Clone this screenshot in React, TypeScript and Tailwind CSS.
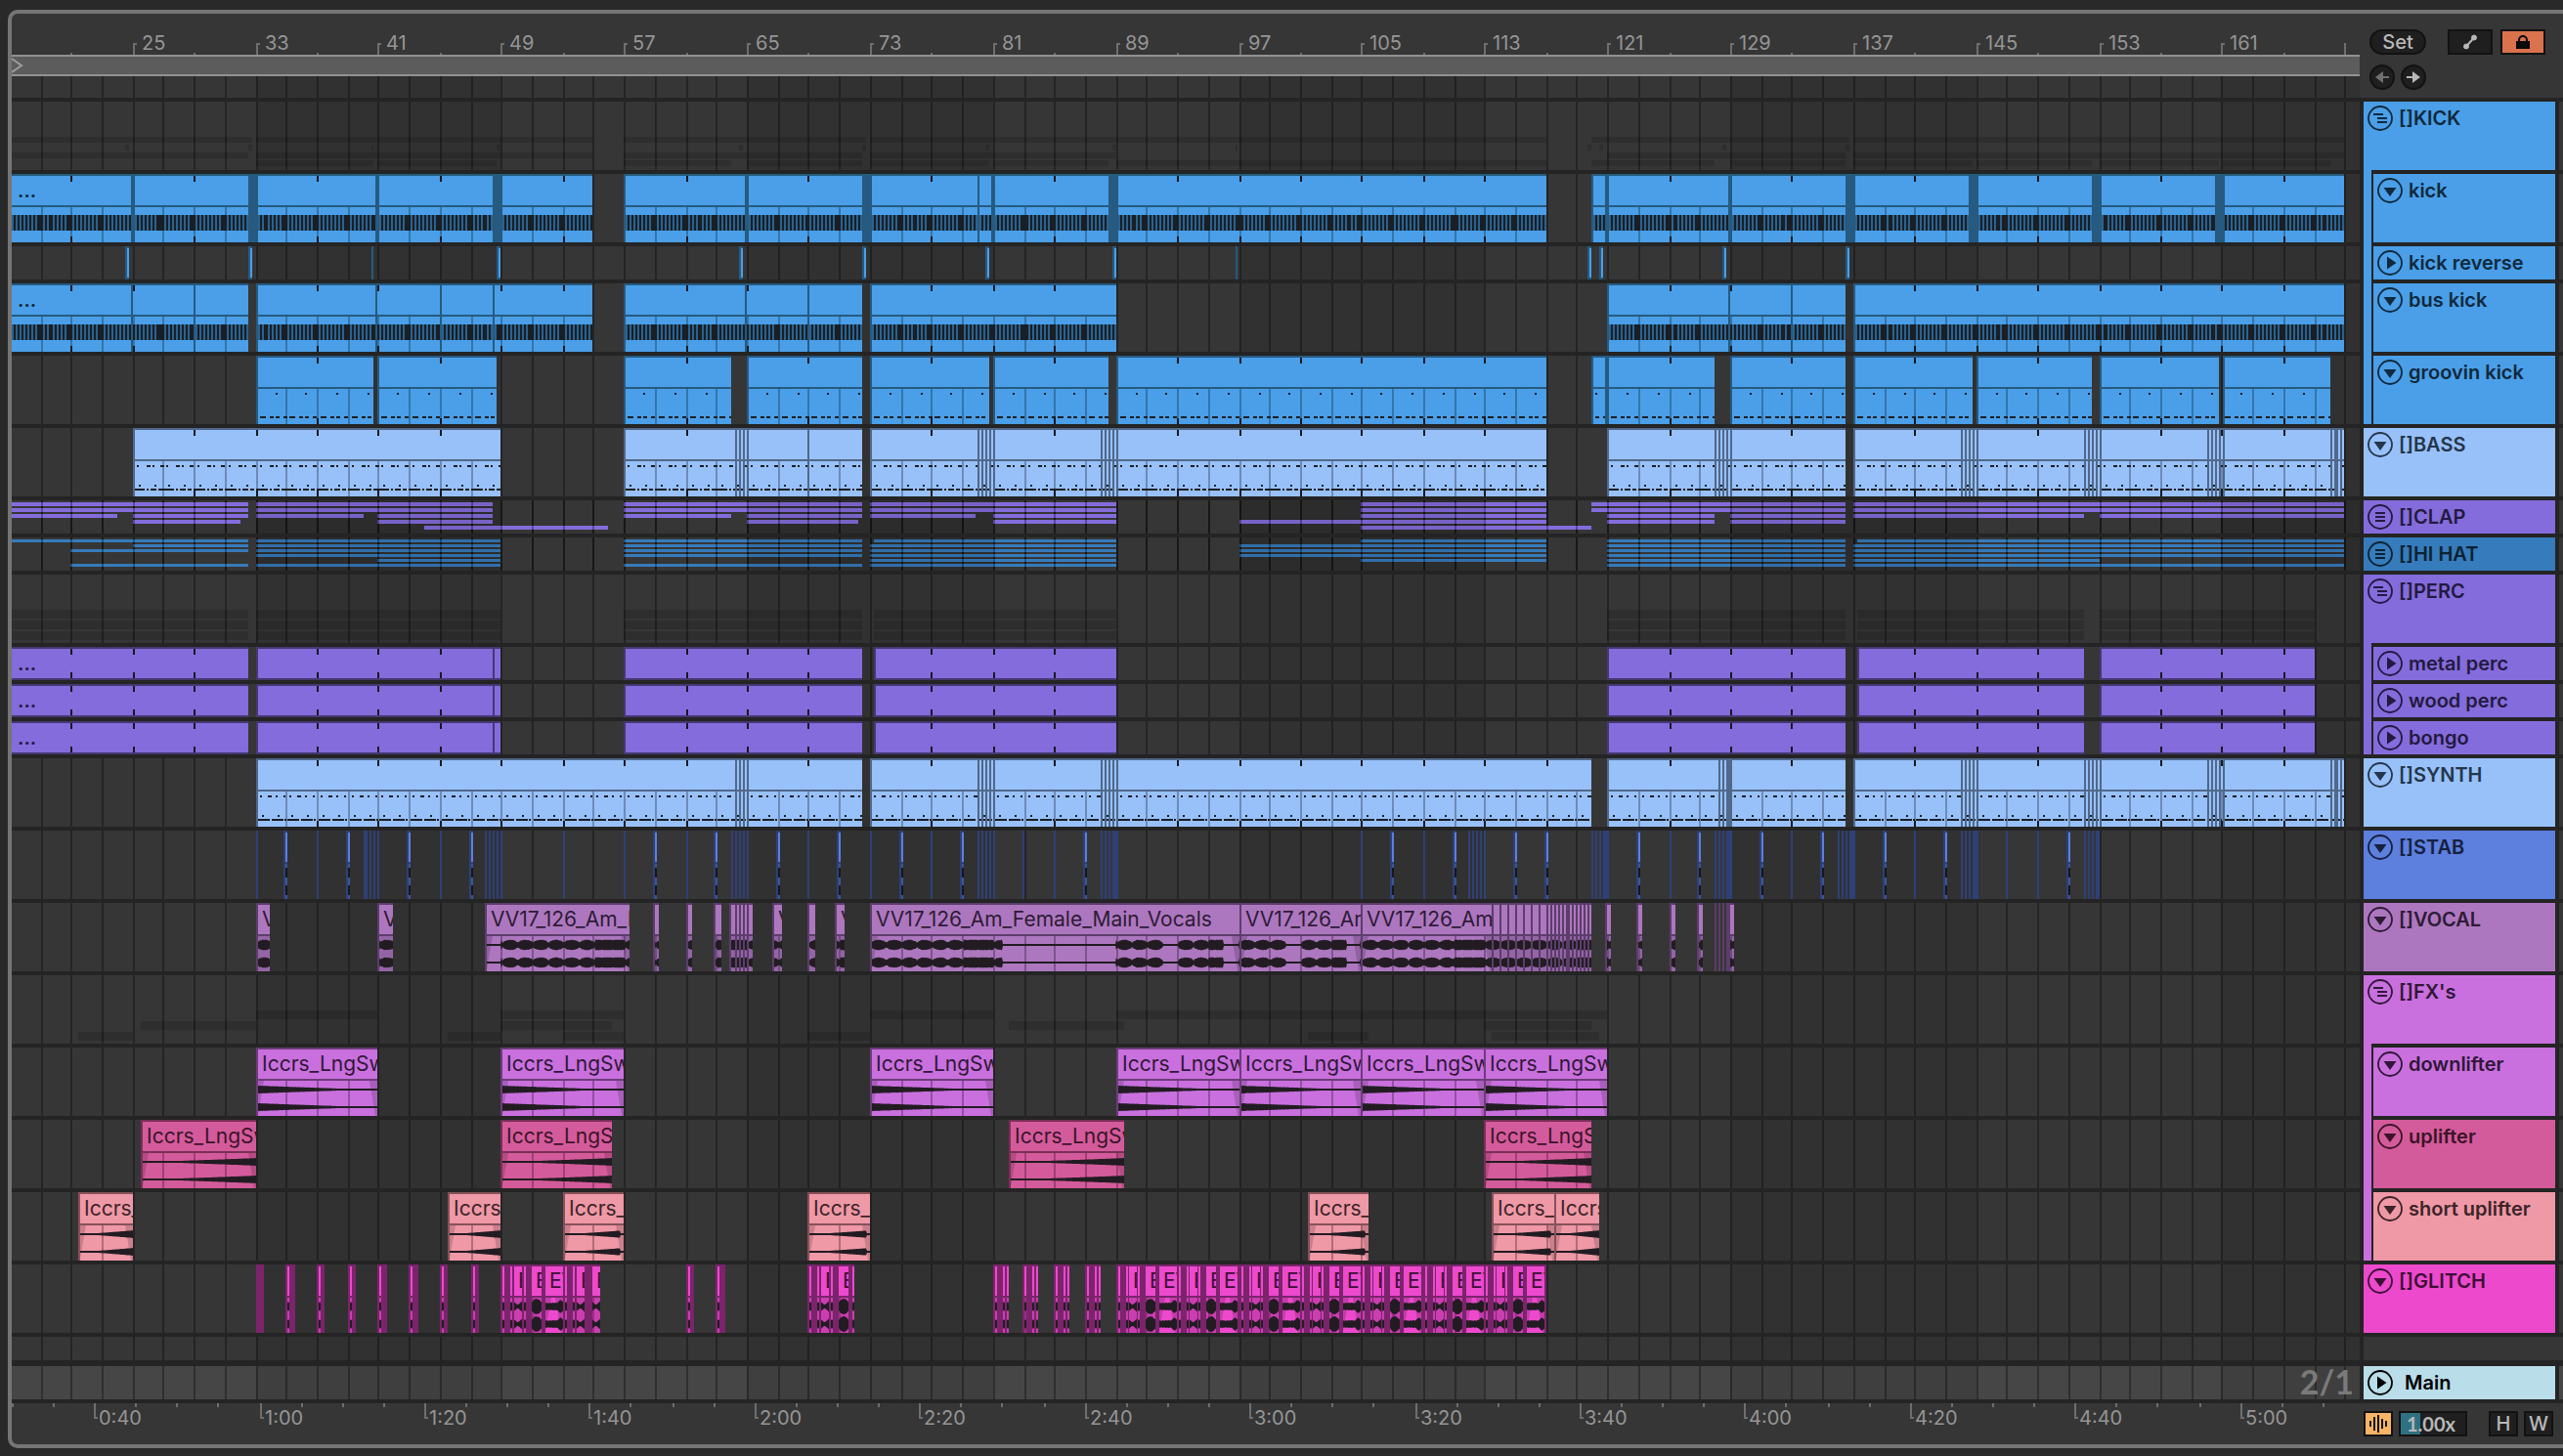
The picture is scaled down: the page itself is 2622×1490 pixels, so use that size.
import React from 'react';

type Span = [number, number];
type Kind = 'beats' | 'groove' | 'bass' | 'synth' | 'plain' | 'vocal' | 'down' | 'up' | 'glitch';

interface Run {
  from: number;
  to: number;
  cuts?: Span[];
  quiet?: Span[];
  title?: string;
}

interface Palette {
  bg: string;
  ink: string;
  fill: string;
  edge: string;
}

interface Track {
  name: string;
  tall: boolean;
  icon: 'down' | 'right' | 'fold' | 'list';
  colors: Palette;
  kind?: Kind;
  runs?: Run[];
  bars?: { height: number; pitch: number; top: number; rows: Span[][]; ghost?: boolean };
  slivers?: Span[];
  hits?: number[];
  children?: Track[];
}

// Timeline scale. Positions are in canvas pixels, the view starts at ORIGIN.
const ORIGIN = 12;
const BAR_WIDTH = 15.716;
const SECOND_WIDTH = 8.443;

const snap = (x: number) => 2 * Math.floor(x / 2);
const barX = (bar: number) => snap(262.2 + (bar - 33) * BAR_WIDTH);
const timeX = (seconds: number) => 266 + (seconds - 60) * SECOND_WIDTH;

const range = (from: number, to: number, step: number) => {
  const out: number[] = [];
  for (let i = from; i <= to; i += step) out.push(i);
  return out;
};

const gridBars = range(17, 261, 2);

const box = (x: number, y: number, w: number, h: number) => `M${x} ${y}h${w}v${h}h${-w}z`;
const lines = (...xs: number[]): Span[] => xs.map((x) => [x, x + 2]);
const runs = (...spans: Span[]): Run[] => spans.map(([from, to]) => ({ from, to }));
const titled = (title: string, ...spans: Span[]): Run[] => spans.map(([from, to]) => ({ from, to, title }));

// The bright parts of a run, between its cuts
const segmentsOf = (run: Run): Span[] => {
  const out: Span[] = [];
  let x = run.from === ORIGIN ? run.from : run.from + 2;
  (run.cuts || []).forEach(([a, b]) => {
    if (a > x) out.push([x, a]);
    x = b;
  });
  if (run.to > x) out.push([x, run.to]);
  return out;
};

const lit = (from: number, to: number, parts: Span[], title?: string): Run => {
  const cuts: Span[] = [];
  let x = from;
  parts.forEach(([a, b]) => {
    cuts.push([x, a]);
    x = b;
  });
  if (x < to) cuts.push([x, to]);
  return { from, to, cuts, title };
};

const blue: Palette = { bg: 'bg-[#4a9fe8]', ink: 'text-[#10293c]', fill: '#4a9fe8', edge: '#265a80' };
const sky: Palette = { bg: 'bg-[#98c1fa]', ink: 'text-[#24364a]', fill: '#98c1fa', edge: '#50688a' };
const purple: Palette = { bg: 'bg-[#846cdc]', ink: 'text-[#231a40]', fill: '#846cdc', edge: '#463872' };
const steel: Palette = { bg: 'bg-[#367bbb]', ink: 'text-[#0a2233]', fill: '#367bbb', edge: '#1e4568' };
const royal: Palette = { bg: 'bg-[#5d7fde]', ink: 'text-[#16213f]', fill: '#5d7fde', edge: '#2e4078' };
const mauve: Palette = { bg: 'bg-[#ad77bf]', ink: 'text-[#2d1b36]', fill: '#ad77bf', edge: '#5c3d6b' };
const orchid: Palette = { bg: 'bg-[#c970de]', ink: 'text-[#301738]', fill: '#c970de', edge: '#6d3c7a' };
const rose: Palette = { bg: 'bg-[#d45b9b]', ink: 'text-[#3b1429]', fill: '#d45b9b', edge: '#7a2f57' };
const salmon: Palette = { bg: 'bg-[#ef98a6]', ink: 'text-[#3c2428]', fill: '#ef98a6', edge: '#86515a' };
const magenta: Palette = { bg: 'bg-[#ec49cd]', ink: 'text-[#3d0f35]', fill: '#ec49cd', edge: '#7b246c' };

const kickRuns: Run[] = [
  { from: 12, to: 606, cuts: [[134, 138], [254, 264], [384, 388], [504, 514]] },
  { from: 638, to: 1582, cuts: [[762, 766], [882, 892], [1000, 1002], [1014, 1018], [1134, 1144]] },
  { from: 1628, to: 2398, cuts: [[1642, 1646], [1768, 1772], [1888, 1898], [2014, 2024], [2140, 2150], [2266, 2276]] },
];

const busRuns: Run[] = [
  { from: 12, to: 254, cuts: lines(134, 198) },
  { from: 262, to: 606, cuts: lines(384, 450, 504) },
  { from: 638, to: 882, cuts: lines(762, 826) },
  { from: 890, to: 1142 },
  { from: 1644, to: 1888, cuts: lines(1768, 1832) },
  { from: 1896, to: 2398 },
];

const grooveRuns: Run[] = [
  ...runs([262, 382], [386, 508], [638, 748], [764, 882], [890, 1012], [1016, 1134], [1142, 1582]),
  { from: 1628, to: 1754, cuts: [[1642, 1646]] },
  ...runs([1770, 1888], [1896, 2018], [2022, 2140], [2148, 2270], [2274, 2384]),
];

const lateCuts: Span[] = [
  ...lines(2006, 2010, 2014, 2018, 2022, 2132, 2136, 2140, 2144, 2148, 2258, 2262, 2266, 2270, 2274, 2384),
  [2388, 2392],
  [2394, 2396],
];

const bassRuns: Run[] = [
  { from: 136, to: 512 },
  { from: 638, to: 882, cuts: lines(752, 756, 760, 764, 826) },
  { from: 890, to: 1582, cuts: lines(1000, 1004, 1008, 1012, 1016, 1126, 1130, 1134, 1138, 1142) },
  { from: 1644, to: 1888, cuts: lines(1754, 1758, 1762, 1766, 1770) },
  { from: 1896, to: 2398, cuts: lateCuts },
];

const synthRuns: Run[] = [
  { from: 262, to: 882, cuts: lines(752, 756, 760, 764) },
  { from: 890, to: 1628, cuts: lines(1000, 1004, 1008, 1012, 1016, 1126, 1130, 1134, 1138, 1142) },
  { from: 1644, to: 1888, cuts: [...lines(1758, 1762), [1766, 1772]] },
  { from: 1896, to: 2398, cuts: lateCuts },
];

const percSpans: Span[] = [[12, 254], [262, 512], [638, 882], [894, 1142], [1644, 1888], [1900, 2132], [2148, 2368]];
const percRuns: Run[] = percSpans.map(([from, to]) => ({ from, to, cuts: from === 262 ? lines(504) : undefined }));

const reverseSpans: Span[] = [
  [128, 132], [254, 258], [380, 382], [508, 512], [756, 760], [882, 886], [1008, 1012], [1138, 1142],
  [1264, 1266], [1624, 1628], [1636, 1640], [1762, 1766], [1888, 1892],
];

const clapRows: Span[][] = [
  [[12, 254], [262, 504], [638, 882], [890, 1142], [1392, 1582], [1628, 1888], [1896, 2398]],
  [[12, 254], [262, 504], [638, 882], [890, 1142], [1392, 1582], [1628, 1888], [1896, 2398]],
  [
    [12, 120], [136, 254], [262, 372], [386, 504], [638, 748], [764, 882], [890, 998], [1016, 1142],
    [1392, 1582], [1644, 1754], [1770, 1888], [1896, 2132], [2148, 2398],
  ],
  [[136, 246], [386, 504], [764, 878], [1016, 1142], [1268, 1582], [1644, 1754], [1770, 1888]],
  [[434, 622], [1392, 1628]],
];

const hatRows: Span[][] = [
  [[12, 254], [262, 512], [638, 882], [894, 1142], [1392, 1582], [1644, 1888], [1900, 2398]],
  [[136, 254], [262, 512], [638, 882], [890, 1142], [1268, 1582], [1644, 1888], [1896, 2398]],
  [[72, 254], [262, 512], [638, 882], [890, 1142], [1268, 1582], [1644, 1888], [1896, 2398]],
  [[262, 512], [638, 882], [890, 1142], [1268, 1582], [1644, 1888], [1896, 2398]],
  [[386, 512], [890, 1142], [1392, 1582], [1644, 1888], [1896, 2148]],
  [[72, 254], [262, 512], [638, 882], [890, 1142], [1644, 1888], [1896, 2398]],
];

const stabSlivers: Span[] = [
  ...lines(262, 324, 378, 382, 386, 450, 496, 500, 504, 508, 512, 576, 638, 702, 748, 752, 756, 760, 764),
  [372, 376],
  ...lines(826, 890, 952, 1000, 1004, 1008, 1012, 1016, 1046, 1078, 1126, 1130, 1134),
  [1138, 1144],
  ...lines(1392, 1456, 1502, 1506, 1510, 1514, 1518, 1628, 1632, 1636),
  [1640, 1646],
  ...lines(1708, 1754, 1758, 1762),
  [1766, 1772],
  ...lines(1832, 1880, 1884, 1888),
  [1892, 1898],
  ...lines(1958, 2006, 2010, 2014),
  [2018, 2024],
  ...lines(2052, 2084, 2132, 2136, 2140),
  [2144, 2148],
];

const stabHits = [
  290, 354, 416, 480, 668, 730, 794, 856, 920, 982, 1108, 1422, 1486, 1548, 1580, 1674, 1736, 1800, 1862,
  1926, 1988, 2114,
];

const VOX = 'VV17_126_Am_Female_Main_Vocals';
const SWEEP = 'Iccrs_LngSweep';

const vocalRuns: Run[] = [
  ...titled(VOX, [262, 276], [386, 402]),
  { from: 496, to: 644, title: VOX, quiet: [[496, 513]] },
  ...runs([668, 674], [702, 708], [730, 738]),
  { from: 746, to: 770, cuts: lines(752, 756, 760, 764) },
  ...titled(VOX, [790, 800]),
  ...runs([826, 834]),
  ...titled(VOX, [854, 864]),
  { from: 890, to: 1268, title: VOX, quiet: [[1026, 1142], [1190, 1206], [1252, 1268]] },
  { from: 1268, to: 1392, title: VOX, quiet: [[1316, 1332], [1378, 1392]] },
  { from: 1392, to: 1526, title: VOX },
  {
    from: 1526,
    to: 1628,
    cuts: [
      ...lines(1534, 1542, 1550, 1558, 1566, 1574, 1582, 1586, 1590, 1594, 1598),
      [1602, 1606],
      ...lines(1608, 1612, 1616, 1620, 1624),
    ],
  },
  ...runs([1642, 1648], [1674, 1680], [1708, 1714], [1736, 1742]),
  lit(1754, 1756, []),
  lit(1758, 1760, []),
  lit(1762, 1764, []),
  lit(1766, 1774, [[1770, 1774]]),
];

const downSpans: Span[] = [[262, 386], [512, 638], [890, 1016], [1142, 1268], [1268, 1392], [1392, 1518], [1518, 1644]];
const upSpans: Span[] = [[144, 262], [512, 626], [1032, 1150], [1518, 1628]];
const shortSpans: Span[] = [[80, 136], [458, 512], [576, 638], [826, 890], [1338, 1400], [1526, 1590], [1590, 1636]];

const glitchRuns: Run[] = [
  lit(262, 270, []),
  ...[[292, 302], [324, 332], [356, 364], [386, 396], [418, 428], [450, 458], [482, 490], [702, 710], [732, 742]].map(
    ([a, b]) => lit(a, b, [[a + 2, a + 4]]),
  ),
  lit(
    512,
    614,
    [[514, 516], [522, 524], [526, 534], [536, 538], [544, 554], [558, 576], [578, 580], [586, 588], [590, 598], [606, 614]],
    'EVO',
  ),
  lit(826, 874, [[828, 830], [836, 838], [840, 848], [850, 852], [858, 868], [872, 874]], 'EVO'),
  ...[1016, 1046, 1078, 1110].map((a) => lit(a, a + 16, [[a + 2, a + 4], [a + 10, a + 12], [a + 14, a + 16]])),
  lit(
    1142,
    1582,
    range(0, 6, 1).flatMap((i) => {
      const x = snap(1142 + i * BAR_WIDTH * 4 + 0.4);
      const parts: Span[] = [
        [x + 2, x + 4],
        [x + 10, x + 12],
        [x + 13, x + 21],
        [x + 22, x + 24],
        [x + 30, x + 40],
        [x + 44, x + 62],
      ];
      return parts;
    }),
    'EVO',
  ),
];

const spansOf = (list: Run[]): Span[] => list.map((r) => [r.from, r.to]);

const tracks: Track[] = [
  {
    name: '[]KICK',
    tall: true,
    icon: 'fold',
    colors: blue,
    bars: {
      height: 6,
      pitch: 8,
      top: 36,
      ghost: true,
      rows: [
        [[12, 258], [262, 606], [638, 886], [890, 1582], [1628, 1892], [1896, 2398]],
        reverseSpans,
        spansOf(busRuns),
        spansOf(grooveRuns),
      ],
    },
    children: [
      { name: 'kick', tall: true, icon: 'down', colors: blue, kind: 'beats', runs: kickRuns },
      { name: 'kick reverse', tall: false, icon: 'right', colors: blue, slivers: reverseSpans },
      { name: 'bus kick', tall: true, icon: 'down', colors: blue, kind: 'beats', runs: busRuns },
      { name: 'groovin kick', tall: true, icon: 'down', colors: blue, kind: 'groove', runs: grooveRuns },
    ],
  },
  { name: '[]BASS', tall: true, icon: 'down', colors: sky, kind: 'bass', runs: bassRuns },
  { name: '[]CLAP', tall: false, icon: 'list', colors: purple, bars: { height: 4, pitch: 6, top: 2, rows: clapRows } },
  { name: '[]HI HAT', tall: false, icon: 'list', colors: steel, bars: { height: 3, pitch: 5, top: 2, rows: hatRows } },
  {
    name: '[]PERC',
    tall: true,
    icon: 'fold',
    colors: purple,
    bars: { height: 9, pitch: 11, top: 36, ghost: true, rows: [percSpans, percSpans, percSpans] },
    children: [
      { name: 'metal perc', tall: false, icon: 'right', colors: purple, kind: 'plain', runs: percRuns },
      { name: 'wood perc', tall: false, icon: 'right', colors: purple, kind: 'plain', runs: percRuns },
      { name: 'bongo', tall: false, icon: 'right', colors: purple, kind: 'plain', runs: percRuns },
    ],
  },
  { name: '[]SYNTH', tall: true, icon: 'down', colors: sky, kind: 'synth', runs: synthRuns },
  { name: '[]STAB', tall: true, icon: 'down', colors: royal, slivers: stabSlivers, hits: stabHits },
  { name: '[]VOCAL', tall: true, icon: 'down', colors: mauve, kind: 'vocal', runs: vocalRuns },
  {
    name: "[]FX's",
    tall: true,
    icon: 'fold',
    colors: orchid,
    bars: { height: 9, pitch: 11, top: 36, ghost: true, rows: [downSpans, upSpans, shortSpans] },
    children: [
      { name: 'downlifter', tall: true, icon: 'down', colors: orchid, kind: 'down', runs: titled(SWEEP, ...downSpans) },
      { name: 'uplifter', tall: true, icon: 'down', colors: rose, kind: 'up', runs: titled(SWEEP, ...upSpans) },
      { name: 'short uplifter', tall: true, icon: 'down', colors: salmon, kind: 'up', runs: titled(SWEEP, ...shortSpans) },
    ],
  },
  { name: '[]GLITCH', tall: true, icon: 'down', colors: magenta, kind: 'glitch', runs: glitchRuns },
];

const lanes: Track[] = tracks.flatMap((t) => [t, ...(t.children || [])]);

// MIDI notes as [offset, width, y] inside a two bar cell
const notes: Record<string, [number, number, number][]> = {
  groove: [[20, 2, 38], [4, 6, 62], [14, 4, 62], [20, 4, 62], [28, 4, 62]],
  bass: [
    [4, 2, 38], [14, 4, 38], [20, 2, 38], [28, 4, 38], [6, 2, 58], [22, 2, 58],
    [0, 12, 62], [14, 2, 62], [18, 6, 62], [26, 4, 62],
  ],
  synth: [
    [4, 2, 38], [12, 4, 38], [20, 2, 38], [28, 2, 38], [6, 2, 58], [22, 2, 58],
    [2, 12, 62], [16, 12, 62], [29, 2, 62],
  ],
};

const notePath = (kind: string, from: number, to: number) =>
  gridBars
    .map(barX)
    .filter((x) => x + 32 > from && x < to)
    .flatMap((x) => notes[kind].map(([dx, w, y]) => box(x + dx, y, w, 2)))
    .join('');

const beatPath = (from: number, to: number) => {
  let d = '';
  for (let k = -70; k < 560; k++) {
    const x = snap(262.2 + (k * BAR_WIDTH) / 4);
    if (x >= from && x < to) d += box(x, 42, 2, 16);
  }
  gridBars.forEach((bar) => {
    const x = barX(bar);
    if (x >= from - 4 && x < to) d += box(x - 2, 42, 4, 16);
  });
  return d;
};

const loudness = (kind: Kind, x: number, a: number, b: number, quiet: Span[]) => {
  const t = (x - a) / (b - a);
  const size = b - a;
  const jitter = ((x * 37) % 11) / 11;
  if (kind === 'down') return Math.max(1, (4 - 4.4 * t) * (0.93 + jitter * 0.12));
  if (kind === 'up') {
    if (b - x < 4 && size < 64 && size > 56) return 1;
    return Math.max(1, 3.9 * Math.pow(t, 1.2));
  }
  if (kind === 'glitch') {
    if (size < 6) return 5 - Math.abs(t - 0.5) * 3;
    if (size <= 8) return 1.5 + 7 * Math.abs(t - 0.45);
    if (size <= 10) return 4 + 3.5 * Math.sin(t * Math.PI) + jitter;
    return t > 0.7 ? 4 + 2.5 * Math.sin((t - 0.7) * 10) : 3.2 + jitter;
  }
  if (quiet.some(([q, r]) => x >= q && x < r)) return 1;
  const place = (((x - 514) % 125.7) + 125.7) % 125.7;
  if (place > 94) return 4.8 + jitter * 0.8;
  return 1.4 + 3.4 * Math.pow(Math.abs(Math.sin(place * 0.2)), 0.5) + jitter * 0.8;
};

const wavePath = (kind: Kind, a: number, b: number, quiet: Span[], mid: number) => {
  const xs = range(a, b - 1, 1).concat(b);
  const up = xs.map((x) => `${x} ${(mid - loudness(kind, x, a, b, quiet)).toFixed(1)}`);
  const down = xs.map((x) => `${x} ${(mid + loudness(kind, x, a, b, quiet)).toFixed(1)}`).reverse();
  return `M${up.join('L')}L${down.join('L')}z`;
};

const Clip: React.FC<{ run: Run; track: Track }> = ({ run, track }) => {
  const { from, to, cuts = [], quiet = [], title } = run;
  const { fill, edge } = track.colors;
  const kind = track.kind as Kind;
  const height = track.tall ? 70 : 34;
  const width = to - from;
  const inside = gridBars.filter((bar) => barX(bar) > from && barX(bar) < to);
  const audio = kind === 'vocal' || kind === 'down' || kind === 'up' || kind === 'glitch';
  const segments = segmentsOf(run);

  let frame = box(from, 0, width, 2);
  if (from !== ORIGIN) frame += box(from, 0, 2, height);
  frame += track.tall ? box(from, 32, width, 2) : box(from, height - 2, width, 2);
  cuts.forEach(([a, b]) => {
    frame += box(a, 0, b - a, height);
  });

  // Beat stripes cover the grid between y 42 and 58
  const cells = inside
    .map((bar) => (kind === 'beats' ? box(barX(bar), 34, 2, 8) + box(barX(bar), 58, 2, 12) : box(barX(bar), 34, 2, 36)))
    .join('');

  const ticks = inside
    .filter((bar) => bar % 4 === 1)
    .map((bar) => box(barX(bar), 2, 2, 6) + box(barX(bar), track.tall ? 64 : 26, 2, 6))
    .join('');

  return (
    <div className="absolute top-0 h-full overflow-hidden" style={{ left: from - ORIGIN, width }}>
      <svg className="absolute inset-0 block" width={width} height={height} viewBox={`${from} 0 ${width} ${height}`} shapeRendering="crispEdges">
        <rect x={from} y={0} width={width} height={height} fill={fill} />
        {audio &&
          segments.map(([a, b]) =>
            b - a < 16 ? (
              <path key={a} d={box(a, 34, b - a, 36)} fill={edge} opacity={0.3} />
            ) : (
              <path key={a} d={`M${a} 34h6L${a} 68zM${b} 34h-8l6 36h2z`} fill={edge} opacity={0.35} shapeRendering="auto" />
            ),
          )}
        {kind === 'beats' && (
          <>
            <path d={box(from, 42, width, 16)} fill="#2a6291" />
            <path d={beatPath(from, to)} fill="#191f24" />
          </>
        )}
        {track.tall && <path d={cells} fill={edge} opacity={0.6} />}
        {notes[kind] && <path d={notePath(kind, from, to)} fill="#1a1f25" />}
        {audio &&
          segments.map(([a, b]) => (
            <path key={a} d={wavePath(kind, a, b, quiet, 43) + wavePath(kind, a, b, quiet, 61)} fill="#221c22" shapeRendering="auto" />
          ))}
        {!audio && <path d={ticks} fill="#16191f" />}
        <path d={frame} fill={edge} />
      </svg>
      {title &&
        segments
          .filter(([a, b]) => b - a >= 8)
          .map(([a, b]) => (
            <span
              key={a}
              className={`absolute top-0.5 overflow-hidden whitespace-nowrap pl-1 text-[21px] leading-[30px] ${track.colors.ink}`}
              style={{ left: a - from, width: b - a }}
            >
              {title}
            </span>
          ))}
      {from === ORIGIN && <span className={`absolute left-1.5 top-0.5 text-xl leading-[30px] font-semibold ${track.colors.ink}`}>...</span>}
    </div>
  );
};

// Alternating 16 bar shades with a line every second bar
const Grid: React.FC = () => (
  <svg className="absolute inset-0 block h-full w-full" shapeRendering="crispEdges" aria-hidden="true">
    {range(33, 225, 32).map((bar) => (
      <rect key={bar} x={barX(bar) - ORIGIN} y={0} width={barX(bar + 16) - barX(bar)} height="100%" fill="#000" opacity={0.09} />
    ))}
    {gridBars.map((bar) => (
      <rect key={bar} x={barX(bar) - ORIGIN} y={0} width={2} height="100%" fill="#000" opacity={0.32} />
    ))}
  </svg>
);

const Lane: React.FC<{ track: Track }> = ({ track }) => {
  const { bars, slivers, hits, colors } = track;
  const height = track.tall ? 70 : 34;
  return (
    <div className={`relative overflow-hidden ${track.tall ? 'h-[70px]' : 'h-[34px]'}`}>
      {bars && (
        <>
          <svg className="absolute inset-0 block h-full w-full" shapeRendering="crispEdges">
            {bars.rows.map((row, i) => (
              <path
                key={i}
                d={row.map(([a, b]) => box(a - ORIGIN, bars.top + i * bars.pitch, b - a, bars.height)).join('')}
                fill={bars.ghost ? '#000' : colors.fill}
                opacity={bars.ghost ? 0.14 : 1}
              />
            ))}
          </svg>
          {!bars.ghost && <Grid />}
        </>
      )}
      {slivers && (
        <svg className="absolute inset-0 block h-full w-full" shapeRendering="crispEdges">
          <path d={slivers.map(([a, b]) => box(a - ORIGIN, 0, b - a, height)).join('')} fill={colors.edge} />
          {!hits && (
            <path d={slivers.filter(([a, b]) => b - a === 4).map(([a]) => box(a + 2 - ORIGIN, 2, 2, 30)).join('')} fill={colors.fill} />
          )}
          {hits && (
            <>
              <path d={hits.map((x) => box(x - ORIGIN, 0, 4, 70)).join('')} fill={colors.edge} />
              <path d={hits.map((x) => box(x + 2 - ORIGIN, 2, 2, 30)).join('')} fill={colors.fill} />
              <path d={hits.map((x) => box(x + 2 - ORIGIN, 34, 2, 36)).join('')} fill="#3c5599" />
              <path d={hits.map((x) => box(x + 2 - ORIGIN, 38, 2, 10) + box(x + 2 - ORIGIN, 56, 2, 10)).join('')} fill="#14181f" />
            </>
          )}
        </svg>
      )}
      {track.runs && track.runs.map((run) => <Clip key={run.from} run={run} track={track} />)}
    </div>
  );
};

const TrackIcon: React.FC<{ icon: Track['icon'] }> = ({ icon }) => (
  <svg className="block h-[26px] w-[26px]" viewBox="0 0 26 26" fill="none" stroke="currentColor" strokeWidth={1.8}>
    <circle cx="13" cy="13" r="12" />
    {icon === 'down' && <path d="M6.500 10h13L13 19z" fill="currentColor" stroke="none" />}
    {icon === 'right' && <path d="M10 6.500v13l9.500-6.500z" fill="currentColor" stroke="none" />}
    {icon === 'fold' && <path d="M6 9h10M10 13h10M10 17h10" strokeWidth={2} />}
    {icon === 'list' && <path d="M8 9h10M8 13h10M8 17h10" strokeWidth={2} />}
  </svg>
);

const TrackTitle: React.FC<{ track: Track }> = ({ track }) => (
  <div className={`${track.tall ? 'h-[70px]' : 'h-[34px]'} ${track.colors.bg} ${track.colors.ink}`}>
    <div className="flex h-[34px] items-center gap-1.5 pl-1">
      <button type="button" aria-label={`Fold ${track.name}`}>
        <TrackIcon icon={track.icon} />
      </button>
      <span className="whitespace-nowrap text-xl leading-6 font-semibold">{track.name}</span>
    </div>
  </div>
);

const TrackHeader: React.FC<{ track: Track }> = ({ track }) => (
  <div className={`border-b-4 border-[#242424] ${track.colors.bg}`}>
    <TrackTitle track={track} />
    {track.children && (
      <div className="ml-2 border-l-2 border-[#242424]">
        {track.children.map((child) => (
          <div key={child.name} className="border-t-4 border-[#242424]">
            <TrackTitle track={child} />
          </div>
        ))}
      </div>
    )}
  </div>
);

const BarRuler: React.FC = () => (
  <div className="relative h-[42px] overflow-hidden">
    <svg className="absolute inset-0 block h-full w-full" shapeRendering="crispEdges" aria-hidden="true">
      {range(21, 169, 4).map((bar) => (
        <path
          key={bar}
          d={bar % 8 === 1 ? box(barX(bar) - ORIGIN, 30, 2, 12) + (bar < 169 ? box(barX(bar) - ORIGIN, 30, 4, 2) : '') : box(barX(bar) - ORIGIN, 40, 2, 2)}
          fill="#6e6e6e"
        />
      ))}
    </svg>
    {range(25, 161, 8).map((bar) => (
      <span key={bar} className="absolute top-[18px] text-xl leading-6 text-[#959595]" style={{ left: barX(bar) + 9 - ORIGIN }}>
        {bar}
      </span>
    ))}
  </div>
);

const TimeRuler: React.FC = () => (
  <div className="relative h-[42px] overflow-hidden">
    <svg className="absolute inset-0 block h-full w-full" shapeRendering="crispEdges" aria-hidden="true">
      {range(30, 310, 5).map((s) => {
        const x = snap(timeX(s)) - ORIGIN;
        return <path key={s} d={s % 20 === 0 ? box(x, 0, 2, 16) + box(x, 14, 4, 2) : box(x, 0, 2, 4)} fill="#6e6e6e" />;
      })}
    </svg>
    {range(40, 300, 20).map((s) => (
      <span key={s} className="absolute top-[3px] text-xl leading-6 text-[#959595]" style={{ left: snap(timeX(s)) + 5 - ORIGIN }}>
        {`${Math.floor(s / 60)}:${String(s % 60).padStart(2, '0')}`}
      </span>
    ))}
  </div>
);

const Timeline: React.FC = () => (
  <div className="min-w-0 flex-1">
    <BarRuler />
    <div className="h-[22px] border-y-2 border-[#929292] bg-[#5c5c5c]">
      <svg className="block h-[18px] w-3" viewBox="0 0 12 18" fill="none" stroke="#9c9c9c" strokeWidth={2} aria-hidden="true">
        <path d="M0 2l10 7-10 7" />
      </svg>
    </div>
    <div className="relative">
      <Grid />
      <div className="relative">
        <div className="h-[22px]" />
        <div className="h-1 bg-[#242424]" />
        {lanes.map((track) => (
          <React.Fragment key={track.name}>
            <Lane track={track} />
            <div className="h-1 bg-[#242424]" />
          </React.Fragment>
        ))}
        <div className="h-6" />
        <div className="h-1.5 bg-[#242424]" />
      </div>
    </div>
    <div className="relative h-[34px] overflow-hidden bg-[#464646]">
      <Grid />
      <span className="absolute right-1.5 top-0 font-[Lato,sans-serif] text-[34px] leading-8 font-bold text-[#7a7a7a]">2/1</span>
    </div>
    <div className="h-1 bg-[#242424]" />
    <TimeRuler />
  </div>
);

const TopControls: React.FC = () => (
  <div className="h-[86px] pl-2.5 pt-4">
    <div className="flex h-[26px] pr-[18px]">
      <button type="button" className="w-[58px] rounded-full border-2 border-[#121212] bg-[#1f1f1f] text-xl leading-5 font-medium text-[#b8b8b8]">
        Set
      </button>
      <button type="button" aria-label="Automation" className="ml-auto flex w-[46px] items-center justify-center border-2 border-[#121212] bg-[#1f1f1f]">
        <svg className="h-4 w-4" viewBox="0 0 16 16" fill="#b8b8b8" stroke="#b8b8b8" aria-hidden="true">
          <circle cx="4" cy="12.500" r="2.500" />
          <circle cx="12" cy="3.500" r="2.500" />
          <path d="M4 12.500l8-9" strokeWidth={2} />
        </svg>
      </button>
      <button type="button" aria-label="Lock" className="ml-2 flex w-[46px] items-center justify-center border-2 border-[#121212] bg-[#d9724d]">
        <svg className="h-4 w-4" viewBox="0 0 16 16" aria-hidden="true">
          <path d="M1 7h14v8H1z" fill="#0a0a0a" />
          <path d="M4 8V6a4 4 0 0 1 8 0v2" fill="none" stroke="#0a0a0a" strokeWidth={2} />
        </svg>
      </button>
    </div>
    <div className="mt-2.5 flex gap-1.5">
      <button type="button" aria-label="Back" className="h-[26px] w-[26px] rounded-full border-2 border-[#121212] bg-[#1f1f1f] text-[#707070]">
        <svg className="block h-[22px] w-[22px]" viewBox="0 0 22 22" fill="currentColor" aria-hidden="true">
          <path d="M4 11l8-6v5h6v2h-6v5z" />
        </svg>
      </button>
      <button type="button" aria-label="Forward" className="h-[26px] w-[26px] rounded-full border-2 border-[#121212] bg-[#1f1f1f] text-[#b8b8b8]">
        <svg className="block h-[22px] w-[22px]" viewBox="0 0 22 22" fill="currentColor" aria-hidden="true">
          <path d="M18 11l-8-6v5H4v2h6v5z" />
        </svg>
      </button>
    </div>
  </div>
);

const BottomControls: React.FC = () => (
  <div className="flex h-[42px] items-start pl-1 pt-2">
    <button type="button" aria-label="Waveform zoom" className="flex h-[26px] w-[30px] items-center justify-center border-2 border-[#121212] bg-[#f6b466]">
      <svg className="h-5 w-5" viewBox="0 0 20 20" fill="none" stroke="#151515" strokeWidth={2} aria-hidden="true">
        <path d="M2 7v6M6 3v14M10 1v18M14 5v10M18 7v6" />
      </svg>
    </button>
    <div className="relative ml-1.5 h-[26px] w-[70px] border-2 border-[#121212] bg-[#1f1f1f]">
      <div className="absolute inset-y-0 left-0 w-5 bg-[#2f7183]" />
      <input
        aria-label="Zoom factor"
        defaultValue="1.00x"
        className="absolute inset-0 w-full bg-transparent pl-1.5 font-[Lato,sans-serif] text-xl leading-5 font-bold text-[#b8b8b8] outline-none"
      />
    </div>
    <button type="button" className="ml-[22px] h-[26px] w-[30px] border-2 border-[#121212] bg-[#1f1f1f] text-xl leading-5 font-medium text-[#b8b8b8]">
      H
    </button>
    <button type="button" className="ml-1.5 h-[26px] w-[30px] border-2 border-[#121212] bg-[#1f1f1f] text-xl leading-5 font-medium text-[#b8b8b8]">
      W
    </button>
  </div>
);

const HeaderColumn: React.FC = () => (
  <div className="w-[208px] shrink-0">
    <TopControls />
    <div className="h-1 bg-[#242424]" />
    <div className="flex bg-[#242424] pl-1">
      <div className="w-[196px]">
        {tracks.map((track) => (
          <TrackHeader key={track.name} track={track} />
        ))}
      </div>
      <div className="ml-1 w-1">
        {lanes.map((track) => (
          <div key={track.name} className={`mb-1 bg-[#363636] ${track.tall ? 'h-[70px]' : 'h-[34px]'}`} />
        ))}
      </div>
    </div>
    <div className="h-6 border-l-4 border-[#242424]" />
    <div className="h-1.5 bg-[#242424]" />
    <div className="flex h-[34px] bg-[#242424] pl-1">
      <div className="flex w-[196px] items-center gap-3 bg-[#b9dde9] pl-1 text-black">
        <button type="button" aria-label="Fold Main">
          <TrackIcon icon="right" />
        </button>
        <span className="text-xl leading-6 font-semibold">Main</span>
      </div>
      <div className="ml-1 w-1 bg-[#464646]" />
    </div>
    <div className="h-1 bg-[#242424]" />
    <BottomControls />
  </div>
);

export default function App() {
  return (
    <div className="min-h-screen bg-[#292929] pb-2 pl-2 pt-2.5 font-[Inter,sans-serif]">
      <main className="flex overflow-hidden rounded-l-[10px] border-4 border-r-0 border-[#757575] bg-[#363636]">
        <Timeline />
        <HeaderColumn />
      </main>
    </div>
  );
}
